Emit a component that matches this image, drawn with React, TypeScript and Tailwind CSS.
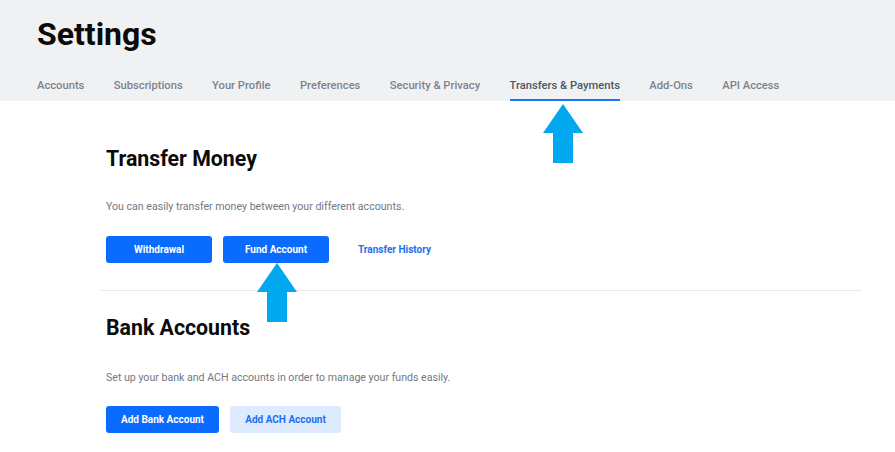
import React from "react";

const TABS = [
  "Accounts",
  "Subscriptions",
  "Your Profile",
  "Preferences",
  "Security & Privacy",
  "Transfers & Payments",
  "Add-Ons",
  "API Access",
];

function Arrow({ className }: { className: string }) {
  return (
    <svg width="40" height="59" viewBox="0 0 40 59" className={className}>
      <path d="M20 0 L40 29 L30 29 L30 59 L10 59 L10 29 L0 29 Z" fill="#00a8f0" />
    </svg>
  );
}

function Button({
  children,
  light,
  w,
}: {
  children: React.ReactNode;
  light?: boolean;
  w: string;
}) {
  return (
    <button
      className={`h-[27px] ${w} rounded-[3px] text-[10px] font-bold ${
        light ? "bg-[#deeafd] text-[#1d6ef0]" : "bg-[#0a6cff] text-white"
      }`}
    >
      {children}
    </button>
  );
}

export default function App() {
  return (
    <div
      className="relative h-[452px] w-[895px] overflow-hidden bg-white"
      style={{ fontFamily: "Roboto, 'Liberation Sans', sans-serif" }}
    >
      <header className="h-[101px] bg-[#f0f1f3] pl-[37px]">
        <h1 className="pt-[14px] text-[32px] font-bold leading-[40px] text-[#0b0b0b]">
          Settings
        </h1>
        <nav className="mt-[18px] flex gap-[29.4px]">
          {TABS.map((t) => {
            const active = t === "Transfers & Payments";
            return (
              <div
                key={t}
                className={`h-[29px] border-b-2 pt-[6px] text-[11.2px] font-medium ${
                  active
                    ? "border-[#1877f2] text-[#4d5566]"
                    : "border-transparent text-[#7c828f]"
                }`}
              >
                {t}
              </div>
            );
          })}
        </nav>
      </header>

      <Arrow className="absolute left-[543px] top-[104px]" />
      <Arrow className="absolute left-[257px] top-[263px]" />

      <main className="pl-[100px] pr-[33px]">
        <section className="pl-[6px] pt-[44px]">
          <h2 className="text-[21.3px] font-bold leading-[28px] text-[#0b0b0b]">
            Transfer Money
          </h2>
          <p className="mt-[27px] text-[10.6px] leading-[14px] text-[#737780]">
            You can easily transfer money between your different accounts.
          </p>
          <div className="mt-[22px] flex items-center">
            <Button w="w-[106px]">Withdrawal</Button>
            <div className="ml-[11px]">
              <Button w="w-[106px]">Fund Account</Button>
            </div>
            <span className="ml-[29px] text-[10px] font-bold text-[#1d6ef0]">
              Transfer History
            </span>
          </div>
        </section>

        <div className="mt-[27px] h-px bg-[#e8e9eb]" />

        <section className="pl-[6px] pt-[23px]">
          <h2 className="text-[21.3px] font-bold leading-[28px] text-[#0b0b0b]">
            Bank Accounts
          </h2>
          <p className="mt-[29px] text-[10.6px] leading-[14px] text-[#737780]">
            Set up your bank and ACH accounts in order to manage your funds easily.
          </p>
          <div className="mt-[21px] flex items-center gap-[11px]">
            <Button w="w-[113px]">Add Bank Account</Button>
            <Button w="w-[111px]" light>
              Add ACH Account
            </Button>
          </div>
        </section>
      </main>
    </div>
  );
}
